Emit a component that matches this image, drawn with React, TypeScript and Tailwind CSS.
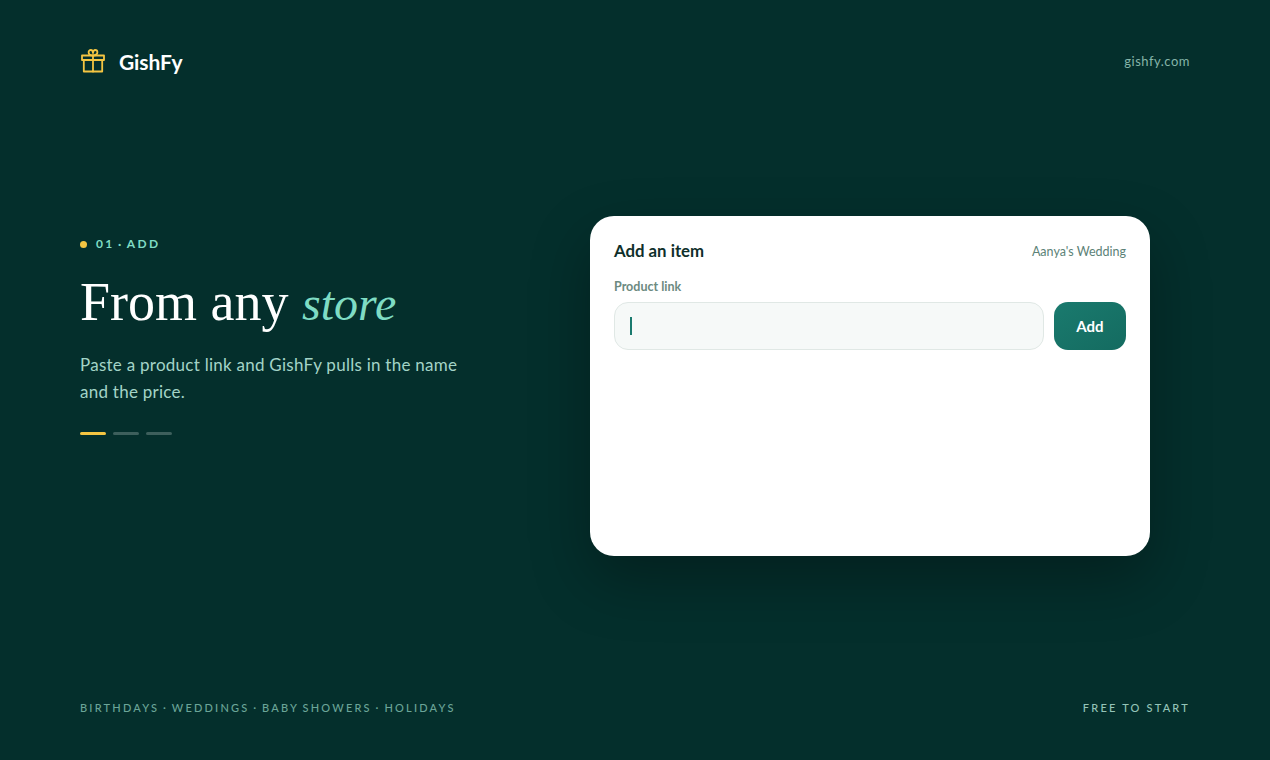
import React from 'react';

const sans = "font-['Lato','Noto_Sans',sans-serif]";

function GiftIcon() {
  return (
    <svg className="-mt-[3px]" width="26" height="26" viewBox="0 0 26 26" fill="none" stroke="#f4c542" strokeWidth="1.8" strokeLinecap="round" strokeLinejoin="round">
      <path d="M2 7.500h22v4.500H2z" />
      <path d="M3.800 12v11.500h18.400V12" />
      <path d="M13 7.500v16" />
      <path d="M13 7.500C10.500 7.500 8.600 6.200 8.600 4.200 8.600 2.900 9.600 2 10.800 2 12.200 2 13 3.400 13 5c0-1.600.8-3 2.200-3 1.200 0 2.200.9 2.200 2.200 0 2-1.900 3.300-4.400 3.300z" />
    </svg>
  );
}

export default function App() {
  return (
    <div className={`${sans} flex h-[760px] w-full flex-col overflow-hidden bg-[#042f2c] px-20 pt-12 pb-[44px]`}>
      {/* Header */}
      <header className="flex h-[28px] items-center justify-between">
        <div className="flex items-center gap-[13px]">
          <GiftIcon />
          <span className="text-[21px] font-bold tracking-[-0.1px] text-white">GishFy</span>
        </div>
        <span className="text-[13px] tracking-[0.5px] text-[#85b5a9]">gishfy.com</span>
      </header>

      {/* Main */}
      <main className="grid flex-1 grid-cols-[430px_1fr] gap-10 pt-[140px]">
        <div className="flex flex-col items-start pt-[20px]">
          <div className="flex items-center gap-[9px]">
            <span className="h-[7px] w-[7px] rounded-full bg-[#f4c542]" />
            <span className="text-[12px] leading-[16px] font-bold tracking-[2.4px] [word-spacing:-2px] text-[#7fdcc4]">01 · ADD</span>
          </div>
          <h1 className="mt-[20px] font-['Liberation_Serif',serif] text-[54px] leading-[60px] font-normal whitespace-nowrap text-white">
            From any <em className="text-[48px] text-[#7fdcc4]">store</em>
          </h1>
          <p className="mt-[17px] w-[395px] text-[17px] leading-[27px] tracking-[0.26px] text-[#a3d4c7]">
            Paste a product link and GishFy pulls in the name and the price.
          </p>
          <div className="mt-[27px] flex gap-[7px]">
            <span className="h-[3px] w-[26px] rounded-full bg-[#f4c542]" />
            <span className="h-[3px] w-[26px] rounded-full bg-[#3d5f5c]" />
            <span className="h-[3px] w-[26px] rounded-full bg-[#3d5f5c]" />
          </div>
        </div>

        <div className="flex justify-center">
          <div className="h-[340px] w-[560px] rounded-[24px] bg-white px-6 pt-[24px] shadow-[0_24px_60px_rgba(0,0,0,0.3)]">
            <div className="flex items-center justify-between">
              <span className="text-[16.8px] leading-[22px] font-bold text-[#0f2f2b]">Add an item</span>
              <span className="pt-[2px] text-[12.5px] text-[#5c8277]">Aanya's Wedding</span>
            </div>
            <div className="mt-[16px] text-[12.5px] leading-[18px] font-bold text-[#6c8a81]">Product link</div>
            <div className="mt-[6px] flex gap-[10px]">
              <div className="flex h-[48px] flex-1 items-center rounded-[14px] border border-[#e0e8e5] bg-[#f6f9f8] pl-[15px]">
                <span className="h-[18px] w-[2px] bg-[#1a7a6e]" />
              </div>
              <button className="h-[48px] w-[72px] rounded-[14px] bg-gradient-to-br from-[#1a7a6e] to-[#146b60] text-[15px] font-bold text-white">
                Add
              </button>
            </div>
          </div>
        </div>
      </main>

      {/* Footer */}
      <footer className="flex items-center justify-between text-[11px] leading-[16px] font-medium tracking-[2.2px]">
        <span className="[word-spacing:-1.2px] text-[#6ba598]">BIRTHDAYS · WEDDINGS · BABY SHOWERS · HOLIDAYS</span>
        <span className="text-[#94c4b8]">FREE TO START</span>
      </footer>
    </div>
  );
}
